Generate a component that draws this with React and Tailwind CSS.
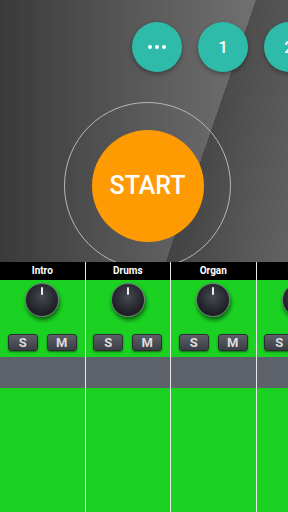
import React from 'react';

const tracks = ['Intro', 'Drums', 'Organ', 'Bass'];

function Knob() {
  return (
    <div className="relative w-[34px] h-[34px] rounded-full border border-[#70737c] bg-[radial-gradient(circle_at_50%_40%,#464952,#202127_65%,#141418)] shadow-[1px_3px_4px_rgba(0,0,0,0.55)]">
      <div className="absolute top-[3px] left-1/2 -translate-x-1/2 w-[2px] h-[8px] rounded-full bg-[#ececec]" />
    </div>
  );
}

function PadButton({ label }) {
  return (
    <div className="w-[30px] h-[17px] rounded-[3px] flex items-center justify-center bg-[linear-gradient(#5d6068,#3c3e45)] border border-[#2c2d32] shadow-[0_1px_2px_rgba(0,0,0,0.5)] text-[13px] font-bold text-[#dcdcdc] leading-none">
      {label}
    </div>
  );
}

function Track({ name }) {
  return (
    <div className="flex flex-col shrink-0 w-[84.5px] h-full">
      <div className="h-[18px] bg-black flex items-center justify-center text-[10px] font-bold text-white leading-none whitespace-nowrap">
        {name}
      </div>
      <div className="h-[77px] bg-[#1bd223] flex flex-col items-center pt-[3px]">
        <Knob />
        <div className="flex gap-[9px] mt-[17px]">
          <PadButton label="S" />
          <PadButton label="M" />
        </div>
      </div>
      <div className="h-[31px] bg-[#5e636b]" />
      <div className="flex-1 bg-[#1bd223]" />
    </div>
  );
}

function Dots() {
  return (
    <div className="flex gap-[3px]">
      <div className="w-[4px] h-[4px] rounded-full bg-white" />
      <div className="w-[4px] h-[4px] rounded-full bg-white" />
      <div className="w-[4px] h-[4px] rounded-full bg-white" />
    </div>
  );
}

export default function App() {
  return (
    <div className="w-[288px] h-[512px] overflow-hidden flex flex-col font-['Roboto','Liberation_Sans',sans-serif]">
      <div className="h-[262px] shrink-0 overflow-hidden bg-[linear-gradient(109deg,transparent_242px,rgba(0,0,0,0.3)_242px,rgba(0,0,0,0.14)_100%),linear-gradient(90deg,#3a3a3a,#5a5a5a_50%,#6e6e6e_85%,#727272)]">
        <div className="flex gap-4 pl-[132px] pt-[22px]">
          {['dots', '1', '2'].map((t) => (
            <div
              key={t}
              className="w-[50px] h-[50px] shrink-0 rounded-full bg-[#2fbba9] shadow-[0_2px_4px_rgba(0,0,0,0.35)] flex items-center justify-center text-white text-[17px] font-medium leading-none"
            >
              {t === 'dots' ? <Dots /> : t}
            </div>
          ))}
        </div>
        <div className="pl-[64px] mt-[30px]">
          <div className="w-[167px] h-[167px] rounded-full border border-[#b8b8b8] flex items-center justify-center">
            <div className="w-[112px] h-[112px] rounded-full bg-[#fe9b03] flex items-center justify-center text-white text-[25px] font-medium leading-none">
              START
            </div>
          </div>
        </div>
      </div>
      <div className="flex-1 flex bg-[#1bd223]">
        {tracks.map((t) => (
          <React.Fragment key={t}>
            <Track name={t} />
            <div className="w-px shrink-0 bg-[#e8e8e8]" />
          </React.Fragment>
        ))}
      </div>
    </div>
  );
}
